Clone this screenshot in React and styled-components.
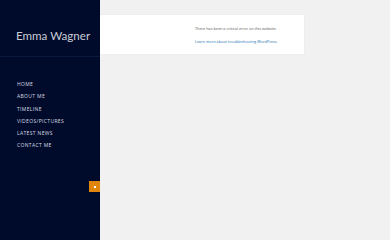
import styled, { createGlobalStyle } from "styled-components";

const GlobalStyle = createGlobalStyle`
  html, body {
    margin: 0;
    padding: 0;
    background: #f1f1f1;
    font-family: "Open Sans", "Liberation Sans", sans-serif;
  }
`;

const Page = styled.div`
  display: flex;
  flex-direction: row;
  width: 390px;
  height: 240px;
  overflow: hidden;
`;

const Sidebar = styled.aside`
  position: relative;
  width: 100px;
  flex-shrink: 0;
  height: 240px;
  background: #000b2b;
  display: flex;
  flex-direction: column;
`;

const Brand = styled.div`
  height: 57px;
  box-sizing: border-box;
  padding: 28px 0 0 16px;
  border-bottom: 1px solid #0a1a3e;
  font-family: Lato, "Open Sans", sans-serif;
  font-size: 11.6px;
  line-height: 16px;
  color: #c9ccd6;
  white-space: nowrap;
`;

const Nav = styled.ul`
  list-style: none;
  margin: 0;
  padding: 24px 0 0 17px;
  display: flex;
  flex-direction: column;
  gap: 6.3px;
`;

const NavItem = styled.li`
  font-family: "Open Sans", "Liberation Sans", sans-serif;
  font-size: 5px;
  line-height: 6px;
  text-transform: uppercase;
  letter-spacing: 0.35px;
  color: #d8dae2;
`;

const Toggle = styled.div`
  position: absolute;
  right: 0;
  top: 181px;
  width: 11px;
  height: 11px;
  background: #e0860d;
  display: flex;
  align-items: center;
  justify-content: center;
  &::after {
    content: "";
    width: 2px;
    height: 2px;
    background: #ffffff;
  }
`;

const Main = styled.main`
  flex: 1;
  padding-top: 15px;
`;

const ErrorBox = styled.div`
  width: 204px;
  height: 39px;
  box-sizing: border-box;
  background: #ffffff;
  box-shadow: 0 0 1px rgba(0, 0, 0, 0.08);
  padding: 11px 0 0 95px;
  display: flex;
  flex-direction: column;
  gap: 7px;
`;

const ErrorText = styled.p`
  margin: 0;
  font-size: 3.8px;
  line-height: 6px;
  color: #555;
  white-space: nowrap;
`;

const ErrorLink = styled.a`
  font-size: 3.8px;
  line-height: 6px;
  color: #2271b1;
  text-decoration: none;
  white-space: nowrap;
`;

const links = ["Home", "About me", "Timeline", "Videos/Pictures", "Latest News", "Contact me"];

export default function App() {
  return (
    <>
      <GlobalStyle />
      <Page>
        <Sidebar>
          <Brand>Emma Wagner</Brand>
          <Nav>
            {links.map((l) => (
              <NavItem key={l}>{l}</NavItem>
            ))}
          </Nav>
          <Toggle />
        </Sidebar>
        <Main>
          <ErrorBox>
            <ErrorText>There has been a critical error on this website.</ErrorText>
            <ErrorLink href="#">Learn more about troubleshooting WordPress.</ErrorLink>
          </ErrorBox>
        </Main>
      </Page>
    </>
  );
}
